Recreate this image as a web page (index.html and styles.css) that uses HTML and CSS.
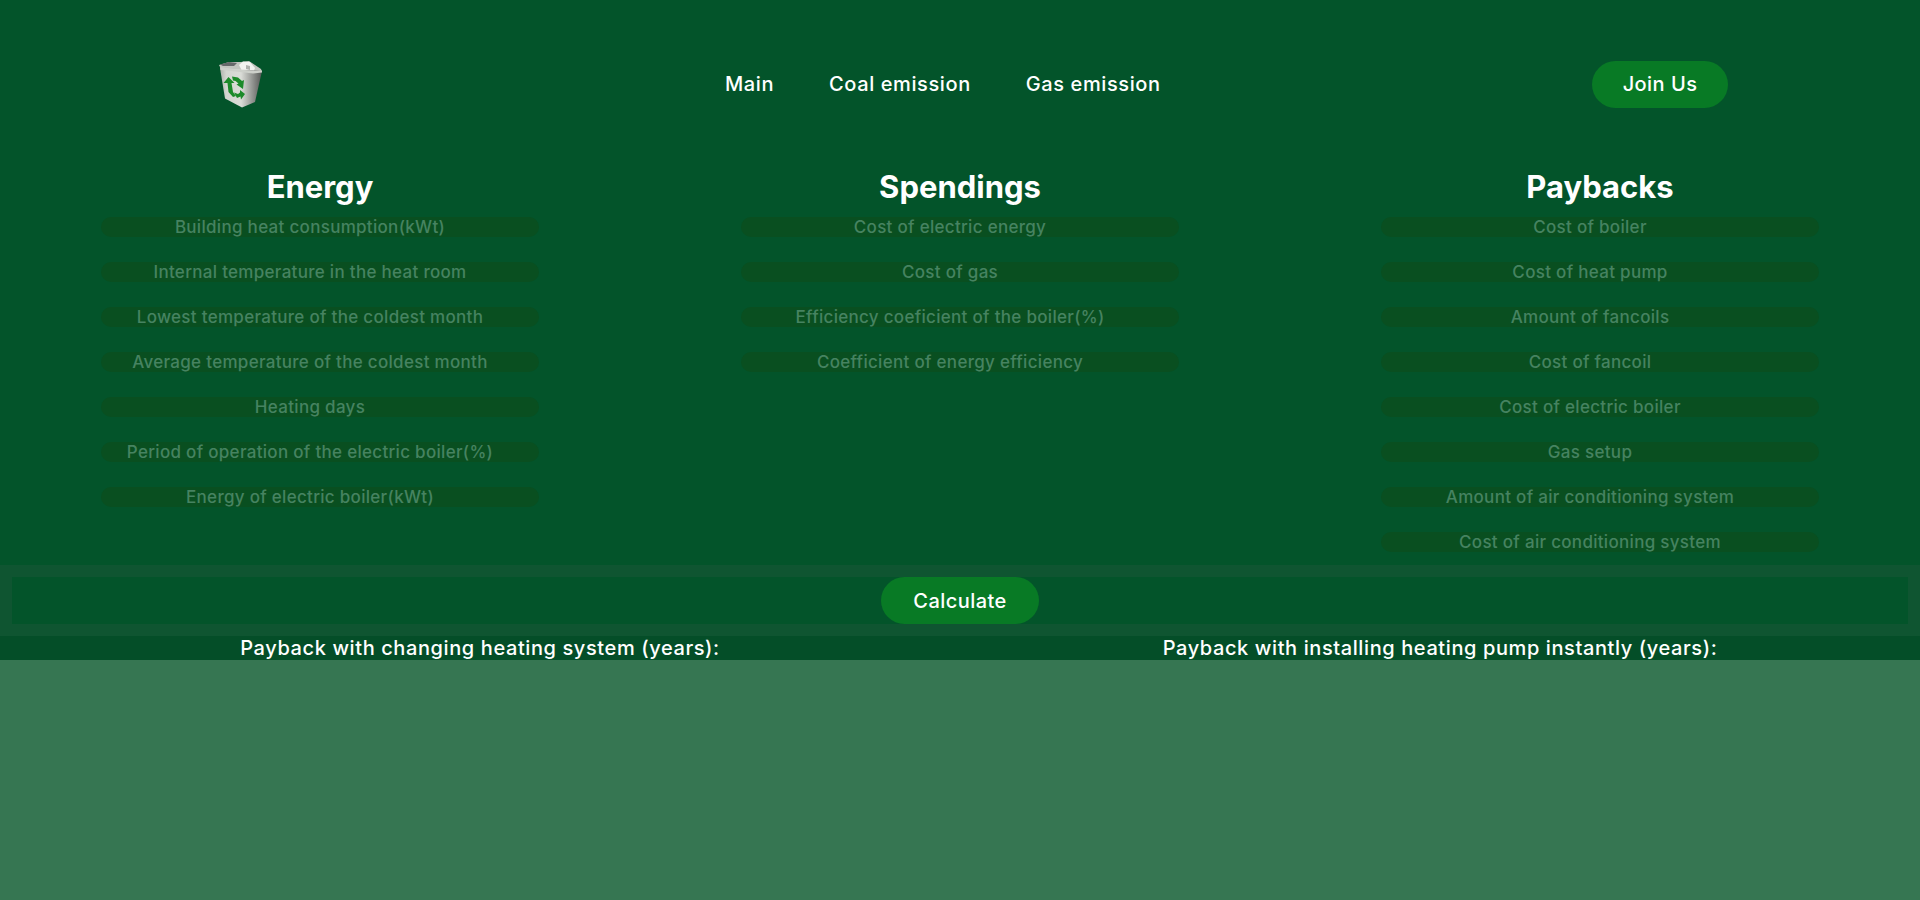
FILE: index.html
```html
<!DOCTYPE html>
<html lang="en">
<head>
    <meta charset="UTF-8" />
    <meta name="viewport" content="width=device-width, initial-scale=1" />
    <title>Payback calculator</title>
    <link rel="stylesheet" href="styles.css">
</head>
<body>
    <div class="page">
        <header class="top-bar">
            <a class="logo" href="#">
                <svg class="logo-bin" width="46" height="50" viewBox="0 0 46 50" aria-hidden="true">
                    <defs>
                        <linearGradient id="binBody" x1="0" y1="0" x2="1" y2="0">
                            <stop offset="0" stop-color="#aeb2ab" />
                            <stop offset="0.15" stop-color="#d3d6d0" />
                            <stop offset="0.5" stop-color="#dadcd7" />
                            <stop offset="0.7" stop-color="#a6a8a4" />
                            <stop offset="1" stop-color="#555755" />
                        </linearGradient>
                    </defs>
                    <path d="M2 6 L12 3 L24 3 L32 2 L44 10 L45 13 L4 10 Z" fill="#c2c5bf" />
                    <path d="M3 5.500 L12 3 L20 4 L17 7 L6 7 Z" fill="#66696a" />
                    <path d="M22 6 L26 2.500 L33 3 L38 9 L36 14 L25 12 Z" fill="#f2f3f0" />
                    <path d="M29 6 L33 7 L33 11 L29 10 Z" fill="#aeb1ad" />
                    <path d="M3 9 L45 12 L38 43 L25 48.500 L8 39.500 Z" fill="url(#binBody)" />
                    <path d="M3 8 L14 10 L36 12 L45 11.500 L45 13.500 L36 14.500 L14 12 L3.500 11 Z" fill="#cdd0ca" />
                    <path d="M11.500 18 L17.500 24 L14.500 24 L16 33 L19 37 L16 38 L11.500 33 L10.500 24 L6.500 24 Z" fill="#1c8a2a" />
                    <path d="M15 17.500 L21 18.500 L25 22 L27 21 L26 30 L19.500 25.500 L21.500 24.500 L18.500 22 L16 21.500 Z" fill="#1c8a2a" />
                    <path d="M17 33.500 L21 35 L23 33.500 L23 31 L28 35 L24 40.500 L23.500 37.500 L20 39 Z" fill="#1c8a2a" />
                </svg>
            </a>
            <nav class="main-nav">
                <a href="#">Main</a>
                <a href="#">Coal emission</a>
                <a href="#">Gas emission</a>
            </nav>
            <a class="btn join-btn" href="#">Join Us</a>
        </header>

        <main class="columns">
            <section class="col">
                <h2>Energy</h2>
                <div class="field">Building heat consumption(kWt)</div>
                <div class="field">Internal temperature in the heat room</div>
                <div class="field">Lowest temperature of the coldest month</div>
                <div class="field">Average temperature of the coldest month</div>
                <div class="field">Heating days</div>
                <div class="field">Period of operation of the electric boiler(%)</div>
                <div class="field">Energy of electric boiler(kWt)</div>
            </section>
            <section class="col">
                <h2>Spendings</h2>
                <div class="field">Cost of electric energy</div>
                <div class="field">Cost of gas</div>
                <div class="field">Efficiency coeficient of the boiler(%)</div>
                <div class="field">Coefficient of energy efficiency</div>
            </section>
            <section class="col">
                <h2>Paybacks</h2>
                <div class="field">Cost of boiler</div>
                <div class="field">Cost of heat pump</div>
                <div class="field">Amount of fancoils</div>
                <div class="field">Cost of fancoil</div>
                <div class="field">Cost of electric boiler</div>
                <div class="field">Gas setup</div>
                <div class="field">Amount of air conditioning system</div>
                <div class="field">Cost of air conditioning system</div>
            </section>
        </main>

        <div class="calc-bar">
            <button class="btn calc-btn">Calculate</button>
        </div>

        <div class="results">
            <p>Payback with changing heating system (years):</p>
            <p>Payback with installing heating pump instantly (years):</p>
        </div>
    </div>
</body>
</html>
```

FILE: styles.css
```css
:root {
    --page: #03542a;
    --below: #367652;
    --strip: #044e28;
    --bar-border: #0f5531;
    --field: #094f20;
    --field-text: #468361;
    --button: #087a25;
}

* {
    box-sizing: border-box;
    margin: 0;
    padding: 0;
}

body {
    font-family: Inter, "Liberation Sans", sans-serif;
    background: var(--below);
    color: #fff;
    min-height: 100vh;
}

.page {
    height: 660px;
    overflow: hidden;
    background: var(--page);
}

.top-bar {
    height: 168px;
    display: flex;
    align-items: center;
    padding-right: 192px;
}

.logo {
    width: 725px;
    padding-left: 217px;
    display: flex;
}

.logo-bin {
    filter: blur(0.4px);
}

.main-nav {
    flex-grow: 1;
    display: flex;
    gap: 55px;
}

.main-nav a {
    color: #fff;
    text-decoration: none;
    font-size: 20px;
    font-weight: 500;
    letter-spacing: 0.6px;
}

.btn {
    display: flex;
    align-items: center;
    justify-content: center;
    height: 47px;
    border: none;
    border-radius: 24px;
    background: var(--button);
    color: #fff;
    font-family: inherit;
    font-size: 20px;
    font-weight: 500;
    letter-spacing: 0.45px;
    text-decoration: none;
}

.join-btn {
    width: 136px;
}

.calc-btn {
    width: 158px;
}

.columns {
    height: 397px;
    display: grid;
    grid-template-columns: repeat(3, 1fr);
}

.col {
    display: flex;
    flex-direction: column;
    align-items: center;
}

.col h2 {
    height: 49px;
    line-height: 38px;
    font-size: 31px;
    font-weight: 700;
}

.field {
    width: 438px;
    height: 20px;
    line-height: 20px;
    margin-bottom: 25px;
    padding-right: 20px;
    border-radius: 10px;
    background: var(--field);
    color: var(--field-text);
    font-size: 17px;
    font-weight: 500;
    letter-spacing: 0.3px;
    text-align: center;
}

.calc-bar {
    height: 71px;
    display: flex;
    justify-content: center;
    border: 12px solid var(--bar-border);
}

.results {
    height: 24px;
    display: grid;
    grid-template-columns: 1fr 1fr;
    background: var(--strip);
}

.results p {
    font-size: 20px;
    font-weight: 500;
    line-height: 24px;
    letter-spacing: 0.6px;
    text-align: center;
}
```
